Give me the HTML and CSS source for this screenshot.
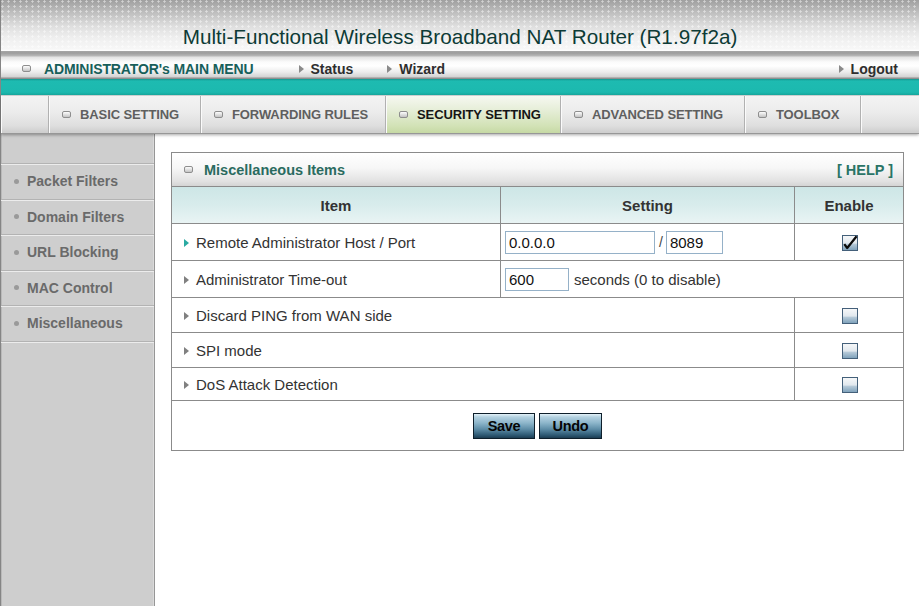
FILE: index.html
```html
<!DOCTYPE html>
<html lang="en">
<head>
<meta charset="utf-8">
<title>Multi-Functional Wireless Broadband NAT Router</title>
<link rel="stylesheet" href="styles.css">
</head>
<body>
<div class="page">
  <header class="banner">
    <h1>Multi-Functional Wireless Broadband NAT Router (R1.97f2a)</h1>
  </header>
  <nav class="menubar">
    <span class="main-menu"><i class="sq"></i>ADMINISTRATOR's MAIN MENU</span>
    <a class="mlink status">Status</a>
    <a class="mlink wizard">Wizard</a>
    <a class="mlink logout">Logout</a>
  </nav>
  <div class="teal"></div>
  <nav class="tabs">
    <span class="tab spacer"></span>
    <a class="tab t-basic"><i class="sq"></i>BASIC SETTING</a>
    <a class="tab t-fwd"><i class="sq"></i>FORWARDING RULES</a>
    <a class="tab t-sec active"><i class="sq"></i>SECURITY SETTING</a>
    <a class="tab t-adv"><i class="sq"></i>ADVANCED SETTING</a>
    <a class="tab t-tool"><i class="sq"></i>TOOLBOX</a>
    <span class="tab fill"></span>
  </nav>
  <div class="body">
    <aside class="sidebar">
      <ul class="side-list">
        <li><i class="dot"></i>Packet Filters</li>
        <li><i class="dot"></i>Domain Filters</li>
        <li><i class="dot"></i>URL Blocking</li>
        <li><i class="dot"></i>MAC Control</li>
        <li><i class="dot"></i>Miscellaneous</li>
      </ul>
    </aside>
    <main class="content">
      <table class="grid">
        <colgroup>
          <col class="c1">
          <col class="c2">
          <col class="c3">
        </colgroup>
        <tr class="title">
          <td colspan="3">
            <div class="title-in">
              <span class="ttl"><i class="sq"></i>Miscellaneous Items</span>
              <a class="help">[ HELP ]</a>
            </div>
          </td>
        </tr>
        <tr class="head">
          <th>Item</th>
          <th>Setting</th>
          <th>Enable</th>
        </tr>
        <tr class="r37">
          <td class="item"><i class="arrow on"></i>Remote Administrator Host / Port</td>
          <td class="set"><input class="in in-host" type="text" value="0.0.0.0"><span class="slash">/</span><input class="in in-port" type="text" value="8089"></td>
          <td class="en"><svg class="cb" width="16" height="16" viewBox="0 0 16 16"><defs><linearGradient id="cbg1" x1="0" y1="0" x2="0" y2="1"><stop offset="0" stop-color="#f7f8f9"/><stop offset="0.5" stop-color="#e1e8ee"/><stop offset="0.6" stop-color="#b4c8d7"/><stop offset="1" stop-color="#7b9fb9"/></linearGradient></defs><rect x="0.5" y="0.5" width="15" height="15" fill="url(#cbg1)" stroke="#44607a"/><path d="M2.3 9.2 L5.2 13 L14.6 1.2" fill="none" stroke="#0a0a0a" stroke-width="2.2" stroke-linejoin="round"/></svg></td>
        </tr>
        <tr class="r37">
          <td class="item"><i class="arrow"></i>Administrator Time-out</td>
          <td class="set" colspan="2"><input class="in in-time" type="text" value="600"><span class="note">seconds (0 to disable)</span></td>
        </tr>
        <tr class="r35">
          <td class="item" colspan="2"><i class="arrow"></i>Discard PING from WAN side</td>
          <td class="en"><svg class="cb" width="16" height="16" viewBox="0 0 16 16"><defs><linearGradient id="cbg2" x1="0" y1="0" x2="0" y2="1"><stop offset="0" stop-color="#f7f8f9"/><stop offset="0.5" stop-color="#e1e8ee"/><stop offset="0.6" stop-color="#b4c8d7"/><stop offset="1" stop-color="#7b9fb9"/></linearGradient></defs><rect x="0.5" y="0.5" width="15" height="15" fill="url(#cbg2)" stroke="#44607a"/></svg></td>
        </tr>
        <tr class="r35">
          <td class="item" colspan="2"><i class="arrow"></i>SPI mode</td>
          <td class="en"><svg class="cb" width="16" height="16" viewBox="0 0 16 16"><defs><linearGradient id="cbg3" x1="0" y1="0" x2="0" y2="1"><stop offset="0" stop-color="#f7f8f9"/><stop offset="0.5" stop-color="#e1e8ee"/><stop offset="0.6" stop-color="#b4c8d7"/><stop offset="1" stop-color="#7b9fb9"/></linearGradient></defs><rect x="0.5" y="0.5" width="15" height="15" fill="url(#cbg3)" stroke="#44607a"/></svg></td>
        </tr>
        <tr class="r34">
          <td class="item" colspan="2"><i class="arrow"></i>DoS Attack Detection</td>
          <td class="en"><svg class="cb" width="16" height="16" viewBox="0 0 16 16"><defs><linearGradient id="cbg4" x1="0" y1="0" x2="0" y2="1"><stop offset="0" stop-color="#f7f8f9"/><stop offset="0.5" stop-color="#e1e8ee"/><stop offset="0.6" stop-color="#b4c8d7"/><stop offset="1" stop-color="#7b9fb9"/></linearGradient></defs><rect x="0.5" y="0.5" width="15" height="15" fill="url(#cbg4)" stroke="#44607a"/></svg></td>
        </tr>
        <tr class="btnrow">
          <td colspan="3"><div class="btns"><button class="btn save" type="button">Save</button><button class="btn undo" type="button">Undo</button></div></td>
        </tr>
      </table>
    </main>
  </div>
</div>
</body>
</html>
```

FILE: styles.css
```css
* { box-sizing: border-box; }
html, body { margin: 0; padding: 0; }
body {
  width: 919px;
  height: 606px;
  overflow: hidden;
  background: #fff;
  font-family: "Liberation Sans", Arial, sans-serif;
  color: #333;
}
.page {
  display: flex;
  flex-direction: column;
  height: 606px;
  border-left: 1px solid #858585;
}

/* banner */
.banner {
  height: 51px;
  flex: none;
  background:
    radial-gradient(circle at 1.5px 1.5px, rgba(255,255,255,0.5) 0.9px, rgba(255,255,255,0) 1.4px) 0 0 / 6px 5px,
    linear-gradient(#9f9f9f 0px, #bdbdbd 12px, #dedede 26px, #efefef 38px, #f7f7f7 49px, #ffffff 51px);
}
.banner h1 {
  margin: 0;
  padding-top: 25px;
  line-height: 24px;
  font-size: 20.7px;
  font-weight: normal;
  text-align: center;
  color: #0d3b36;
}

/* menu bar */
.menubar {
  height: 28px;
  flex: none;
  display: flex;
  align-items: center;
  padding-top: 7px;
  padding-left: 21px;
  padding-right: 21px;
  background: linear-gradient(#a6a6a6 0px, #9d9d9d 2px, #b9b9b9 5px, #e2e2e2 6px, #fbfbfb 11px, #ffffff 15px, #ececec 21px, #d2d2d2 26px, #8f8f8f 27px, #8f8f8f 28px);
  font-size: 14px;
  font-weight: bold;
}
.main-menu {
  display: flex;
  align-items: center;
  color: #175f5a;
  letter-spacing: -0.1px;
}
.main-menu .sq { margin-right: 13px; }
.mlink {
  display: flex;
  align-items: center;
  color: #2e2e2e;
}
.mlink::before {
  content: "";
  width: 0;
  height: 0;
  border-top: 4px solid transparent;
  border-bottom: 4px solid transparent;
  border-left: 5px solid #8a8a8a;
  margin-right: 7px;
}
.status { margin-left: 45px; }
.wizard { margin-left: 34px; }
.logout { margin-left: auto; }

.sq {
  display: inline-block;
  flex: none;
  width: 9px;
  height: 7px;
  border: 1px solid #8e8e8e;
  border-radius: 2px;
  background: linear-gradient(#fdfdfd, #c4c4c4);
}

/* teal strip */
.teal {
  height: 17px;
  flex: none;
  background: linear-gradient(#14968e 0px, #1ebbb1 2px, #1cb9af 13px, #17a99f 16px, #d9dcdc 16px);
}

/* tabs */
.tabs {
  height: 38px;
  flex: none;
  display: flex;
  position: relative;
  z-index: 1;
  background: linear-gradient(#f3f3f3 0px, #ececec 16px, #dedede 30px, #cfcfcf 36px);
  border-bottom: 1px solid #979797;
  box-shadow: 0 1px 3px rgba(0, 0, 0, 0.35);
}
.tab {
  display: flex;
  align-items: center;
  padding-left: 13px;
  border-right: 1px solid #b1b1b1;
  box-shadow: inset 1px 0 0 #fbfbfb;
  font-size: 13px;
  font-weight: bold;
  color: #5f5f5f;
  white-space: nowrap;
  letter-spacing: -0.1px;
}
.tab .sq { margin-right: 9px; }
.spacer { width: 48px; }
.t-basic { width: 152px; }
.t-fwd { width: 185px; }
.t-sec { width: 175px; }
.t-adv { width: 184px; }
.t-tool { width: 116px; }
.fill { flex: 1; border-right: none; }
.tab.active {
  background: linear-gradient(#f6f8f1 0px, #e6eed8 14px, #d2e2b6 30px, #c6d9a4 37px);
  color: #151515;
}

/* body */
.body {
  flex: 1;
  display: flex;
  min-height: 0;
}
.sidebar {
  width: 154px;
  flex: none;
  background: #cecece;
  border-right: 1px solid #969696;
  box-shadow: inset -1px 0 0 #dadada, inset 1px 0 0 #b9b9b9;
  padding-top: 29px;
}
.side-list {
  list-style: none;
  margin: 0;
  padding: 0;
  border-top: 1px solid #b3b3b3;
  box-shadow: inset 0 1px 0 #ececec;
}
.side-list li {
  height: 35.5px;
  display: flex;
  align-items: center;
  padding-left: 13px;
  border-bottom: 1px solid #b3b3b3;
  box-shadow: 0 1px 0 #ececec;
  font-size: 14px;
  font-weight: bold;
  color: #6a6a6a;
}
.dot {
  width: 5px;
  height: 5px;
  border-radius: 50%;
  background: #9a9a9a;
  margin-right: 8px;
}

.content {
  flex: 1;
  padding: 18px 15px 0 16px;
}

/* table */
.grid {
  width: 733px;
  border-collapse: separate;
  border-spacing: 0;
  border-top: 1px solid #8b8b8b;
  border-left: 1px solid #8b8b8b;
  table-layout: fixed;
}
.grid td, .grid th {
  border-right: 1px solid #8b8b8b;
  border-bottom: 1px solid #8b8b8b;
  padding: 0;
}
.c1 { width: 329px; }
.c2 { width: 294px; }
.c3 { width: 109px; }

.title td {
  height: 34px;
  background: linear-gradient(#ffffff 0%, #f7f7f7 45%, #e2e2e2 85%, #d4d4d4 100%);
}
.title-in {
  display: flex;
  align-items: center;
  justify-content: space-between;
  padding: 0 10px 0 12px;
}
.ttl {
  display: flex;
  align-items: center;
  font-size: 14.5px;
  font-weight: bold;
  color: #2a6b60;
}
.ttl .sq { margin-right: 11px; }
.help {
  font-size: 14.5px;
  font-weight: bold;
  color: #2a7466;
}

.head th {
  height: 37px;
  background: linear-gradient(#cde6e6 0%, #d8ecec 50%, #e9f4f4 100%);
  font-size: 15px;
  font-weight: bold;
  color: #333;
  text-align: center;
}

.r37 td { height: 37px; }
.r35 td { height: 35px; }
.r34 td { height: 33px; }

.item {
  font-size: 15px;
  color: #333;
  padding-left: 12px !important;
  white-space: nowrap;
}
.arrow {
  display: inline-block;
  width: 0;
  height: 0;
  border-top: 4px solid transparent;
  border-bottom: 4px solid transparent;
  border-left: 5px solid #808080;
  margin-right: 7px;
  vertical-align: 1px;
}
.arrow.on { border-left-color: #2aaaa2; }

.set {
  padding-left: 4px !important;
  white-space: nowrap;
  font-size: 15px;
}
.in {
  height: 23px;
  border: 1px solid #95b1c8;
  padding: 0 3px;
  font-family: "Liberation Sans", Arial, sans-serif;
  font-size: 15px;
  color: #111;
  background: #fff;
  vertical-align: middle;
  outline: none;
}
.in-host { width: 150px; }
.in-port { width: 57px; }
.in-time { width: 64px; }
.slash {
  display: inline-block;
  margin: 0 3px 0 4px;
  vertical-align: middle;
  font-size: 14px;
  color: #444;
}
.note {
  margin-left: 5px;
  vertical-align: middle;
  color: #333;
}

.en {
  text-align: center;
}
.cb {
  display: inline-block;
  vertical-align: middle;
  overflow: visible;
  margin-left: 2px;
}

.btnrow td { height: 50px; }
.btns {
  display: flex;
  justify-content: center;
  gap: 4px;
}
.btn {
  height: 26px;
  padding: 0;
  border: 1px solid #0e1f2b;
  background: linear-gradient(#e4f2f8 0px, #b3d1e0 3px, #8cb5ca 9px, #5f8ea8 15px, #2e5a74 21px, #163347 25px);
  font-family: "Liberation Sans", Arial, sans-serif;
  font-size: 14.5px;
  font-weight: bold;
  color: #050505;
  letter-spacing: -0.3px;
}
.save { width: 62px; }
.undo { width: 63px; }
```
